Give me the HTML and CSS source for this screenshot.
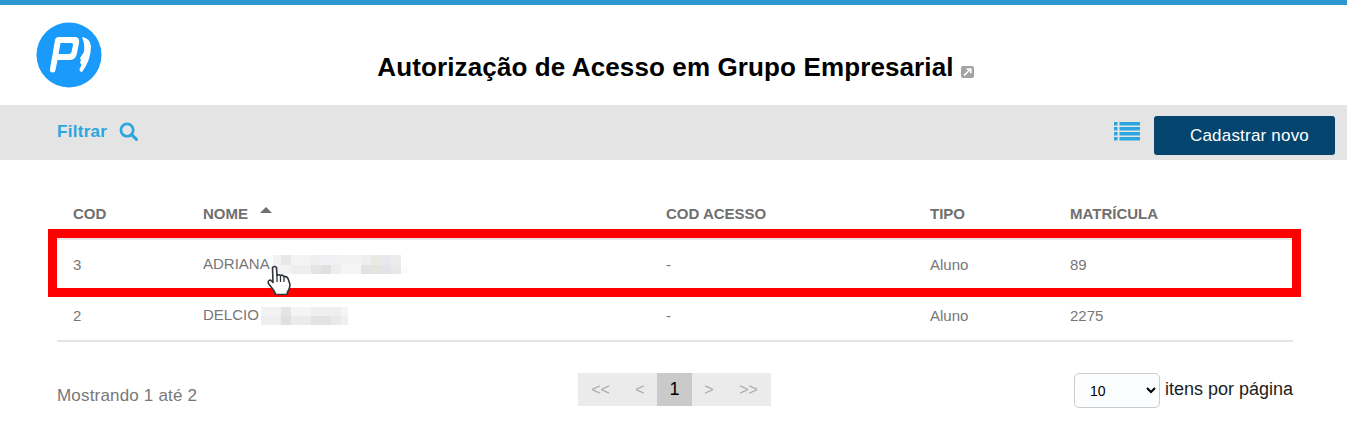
FILE: index.html
```html
<!DOCTYPE html>
<html lang="pt">
<head>
<meta charset="utf-8">
<title>Autorização de Acesso em Grupo Empresarial</title>
<link rel="stylesheet" href="styles.css">
</head>
<body>
<div class="topline"></div>
<header class="head">
  <svg class="logo" viewBox="0 0 66 66" width="66" height="66">
    <circle cx="33" cy="33" r="32.500" fill="#1a9bfb"/>
    <path fill-rule="evenodd" d="M19 18 Q19.500 15 23 15 H39 Q44 15 43 21 L41 31 Q40 38 34 38 H21.500 L19.500 48 Q19 51 16 50.500 Q13.500 50 14 47 Z M24.500 21 L22.500 32 H33 Q35 32 35.500 30 L37 23 Q37.300 21 35 21 Z" fill="#fff"/>
    <path d="M46 15 Q54 16 55 24 Q55 38 46 50 Q43.500 50 43.500 47 L45.500 43 L44 40.500 L45 38.500 L44 36 L48 30 Q49 22 46 15 Z" fill="#fff"/>
  </svg>
  <h1 class="title">Autorização de Acesso em Grupo Empresarial<svg class="ext" viewBox="0 0 13 12" width="13" height="12"><rect width="13" height="12" rx="2" fill="#a3a3a3"/><path d="M3 9.500 L9 3.500 M5.500 3 H9.800 V7.200" fill="none" stroke="#fff" stroke-width="1.700"/></svg></h1>
</header>
<div class="bar">
  <a class="filter">Filtrar
    <svg viewBox="0 0 20 20" width="19" height="19"><circle cx="8.500" cy="8.500" r="6.500" fill="none" stroke="#2ba6df" stroke-width="2.800"/><path d="M13.500 13.500 L18.300 18.300" stroke="#2ba6df" stroke-width="3.200" stroke-linecap="round"/></svg>
  </a>
  <div class="actions">
    <svg viewBox="0 0 26 20" width="26" height="20"><path d="M0 1h3.500v3.500H0zM5.500 1H26v3.500H5.500zM0 6h3.500v3.500H0zM5.500 6H26v3.500H5.500zM0 11h3.500v3.500H0zM5.500 11H26v3.500H5.500zM0 16h3.500v3.500H0zM5.500 16H26v3.500H5.500z" fill="#2ba6df"/></svg>
    <button class="new">Cadastrar novo</button>
  </div>
</div>
<main class="content">
  <table class="grid">
    <thead>
      <tr><th class="c1">COD</th><th class="c2">NOME<span class="sort"></span></th><th class="c3">COD ACESSO</th><th class="c4">TIPO</th><th>MATRÍCULA</th></tr>
    </thead>
    <tbody>
      <tr><td>3</td><td>ADRIANA<span class="blur blur-a"></span></td><td>-</td><td>Aluno</td><td>89</td></tr>
      <tr><td>2</td><td>DELCIO<span class="blur blur-b"></span></td><td>-</td><td>Aluno</td><td>2275</td></tr>
    </tbody>
  </table>
  <div class="foot">
    <span class="count">Mostrando 1 até 2</span>
    <nav class="pager"><span class="pg w1">&lt;&lt;</span><span class="pg w2">&lt;</span><span class="pg cur">1</span><span class="pg w2">&gt;</span><span class="pg w1">&gt;&gt;</span></nav>
    <div class="perpage">
      <select class="size"><option>10</option></select>
      <span>itens por página</span>
    </div>
  </div>
</main>
<div class="mark"></div>
<svg class="hand" viewBox="0 0 24 30" width="24" height="30">
  <path d="M5.500 2.500 Q7.500 0.500 9.500 2.500 L10 10.500 Q12 9 13.500 10.500 Q15.500 9.500 17 11.500 Q19.500 11 21 13.500 L23 19.500 Q23 24 20.500 27 L20 29.500 H8.500 L7.500 26.500 L1.500 18.500 Q0.500 15.500 3.500 15 L6 17.500 Z" fill="#fff" stroke="#30343c" stroke-width="1.600" stroke-linejoin="round"/>
  <path d="M10 10.500 V17 M13.500 10.500 V17 M17 11.500 V17" stroke="#30343c" stroke-width="1.300" fill="none"/>
</svg>
</body>
</html>
```
FILE: styles.css
```css
* { box-sizing: border-box; }
html, body { margin: 0; padding: 0; }
body { width: 1347px; height: 429px; overflow: hidden; background: #fff; font-family: "Liberation Sans", Arial, sans-serif; position: relative; }
.topline { height: 5px; background: #2e97d3; }
.head { height: 100px; position: relative; display: flex; justify-content: center; }
.logo { position: absolute; left: 36px; top: 17px; }
.title { margin: 47px 0 0; font-size: 26px; letter-spacing: .12px; line-height: 30px; font-weight: 700; color: #000; padding-left: 4px; }
.ext { margin-left: 7px; vertical-align: -2px; }
.bar { height: 55px; background: #e4e4e4; display: flex; justify-content: space-between; align-items: center; padding: 0 12px 0 57px; }
.filter { display: flex; align-items: center; gap: 12px; color: #2ba6df; font-size: 17px; letter-spacing: .3px; font-weight: 700; margin-top: -2px; }
.actions { display: flex; align-items: center; gap: 14px; margin-top: 6px; }
.actions svg { margin-top: -9px; margin-left: -1px; }
.new { width: 181px; height: 39px; border: 0; border-radius: 3px; background: #03456f; color: #fff; font: 17px "Liberation Sans", Arial, sans-serif; letter-spacing: .2px; padding: 0 0 0 10px; }
.content { padding: 30px 54px 0 57px; }
.grid { width: 1236px; border-collapse: collapse; table-layout: fixed; font-size: 15px; color: #777; border-bottom: 2px solid #e0e6e8; }
.grid th { height: 49px; padding: 0 0 2px 16px; text-align: left; font-weight: 700; color: #6f6f6f; border-bottom: 2px solid #e8e8e8; }
.c1 { width: 130px; }
.c2 { width: 463px; }
.c3 { width: 264px; }
.c4 { width: 140px; }
.grid td { height: 51px; padding: 0 0 0 16px; }
.grid tbody tr:first-child td { padding-bottom: 2px; }
.sort { display: inline-block; width: 0; height: 0; margin: 0 0 0 12px; vertical-align: 6px; border: 6px solid transparent; border-top: 0; border-bottom: 6px solid #6f6f6f; }
.blur { display: inline-block; vertical-align: -5px; background-repeat: no-repeat; }
.blur-a { width: 135px; height: 19px; margin-left: 3px; background-size: 100% 10px, 100% 9px; background-position: 0 0, 0 10px; background-image:
  linear-gradient(90deg, #f2f2f2 0 8px, #e8e8e8 8px 18px, #f3f3f3 18px 38px, #efefef 38px 48px, #f0f0f5 48px 68px, #f2f2f2 68px 88px, #efefef 88px 98px, #ebe9e6 98px 108px, #e6e8ee 108px 118px, #ececec 118px 128px, #fff 128px),
  linear-gradient(90deg, #f3f3f3 0 18px, #eeeeee 18px 38px, #e4e4e4 38px 48px, #e0e0e0 48px 58px, #eeeeee 58px 68px, #f5f5f5 68px 88px, #e2e2e2 88px 98px, #e6e4e0 98px 108px, #e2e4ea 108px 118px, #e8e8e8 118px 128px, #fafbfc 128px); }
.blur-b { width: 87px; height: 18px; margin-left: 2px; background-size: 100% 9px, 100% 9px; background-position: 0 0, 0 9px; background-image:
  linear-gradient(90deg, #f2f2f2 0 20px, #e4e4e4 20px 30px, #f4f4f4 30px 50px, #efefef 50px 70px, #eeeeee 70px 80px, #f5f5f5 80px),
  linear-gradient(90deg, #eeeeee 0 20px, #e0e0e0 20px 30px, #ebebeb 30px 50px, #e4e2e0 50px 70px, #e8e8ee 70px 80px, #f0f0f0 80px); }
.foot { display: flex; justify-content: space-between; align-items: flex-start; position: relative; margin-top: 31px; height: 40px; width: 1236px; }
.count { color: #777; font-size: 17px; letter-spacing: .18px; margin-top: 13px; }
.pager { position: absolute; left: 521px; top: 0; display: flex; height: 33px; background: #ebebeb; color: #aaa; font-size: 16px; }
.pg { display: flex; align-items: center; justify-content: center; }
.w1 { width: 45px; }
.w2 { width: 34px; }
.cur { width: 35px; background: #cacaca; color: #000; font-size: 18px; }
.perpage { display: flex; align-items: center; gap: 5px; color: #1c1c1c; font-size: 18px; height: 35px; }
.perpage span { margin-top: -3px; }
.size { width: 86px; height: 35px; border: 1px solid #ccc; border-radius: 5px; background: #fcfdff; font: 14px "Liberation Sans", Arial, sans-serif; color: #000; padding-left: 11px; }
.mark { position: absolute; left: 48px; top: 229px; width: 1253px; height: 68px; border: 9px solid #f00; }
.hand { position: absolute; left: 267px; top: 265px; }
```
